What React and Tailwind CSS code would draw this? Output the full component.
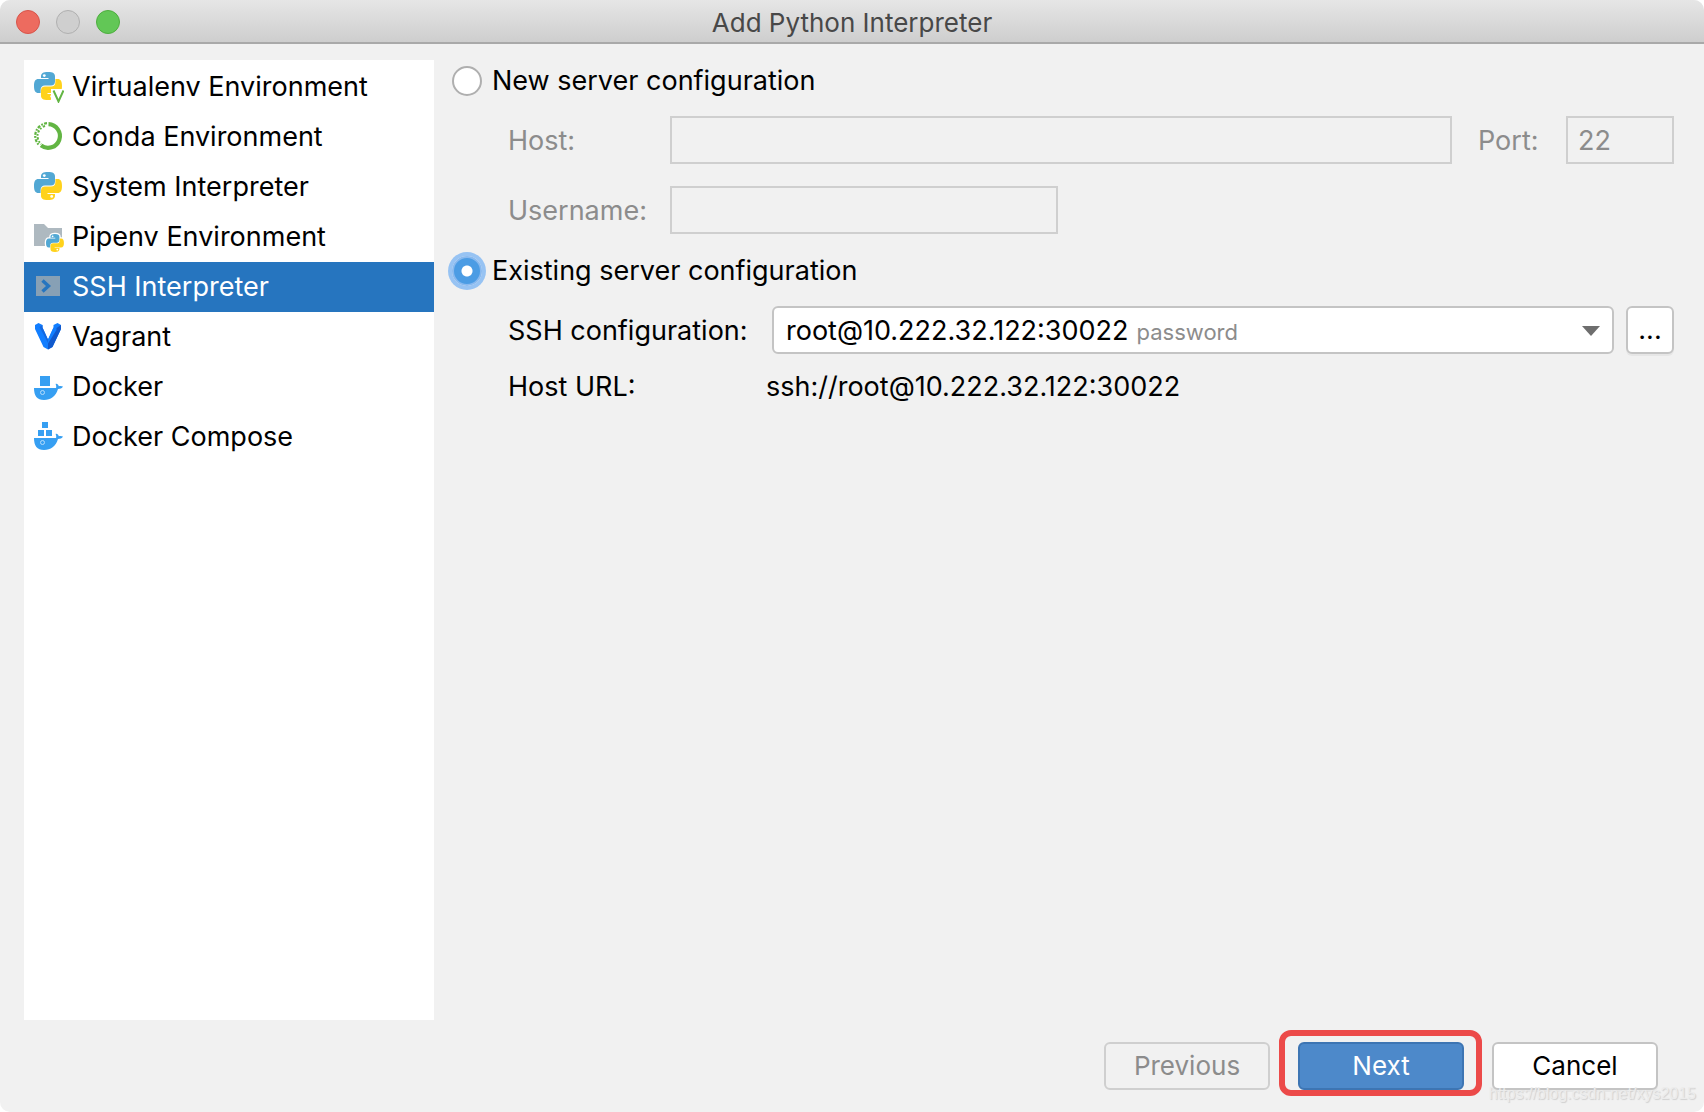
import React from "react";

const SNAKE =
  "M7 4.5C7 1.2 9 0 14 0S21 1.2 21 4.5V9.5C21 12 19.5 13.5 17 13.5H11C8.2 13.5 6.6 15 6.6 18V21H4.5C1.2 21 0 18.5 0 14S1.2 7 4.5 7H14.5V6H7Z";

function Snakes() {
  return (
    <>
      <path d={SNAKE} fill="#52a8d4" />
      <path d={SNAKE} fill="#ffd21c" transform="rotate(180 14 14)" />
      <circle cx="10.3" cy="3.6" r="1.4" fill="#fff" />
      <circle cx="17.7" cy="24.4" r="1.4" fill="#fff" />
    </>
  );
}

function Icon({ children }) {
  return (
    <svg viewBox="0 0 32 32" className="size-8 shrink-0" aria-hidden="true">
      {children}
    </svg>
  );
}

function VirtualenvIcon() {
  return (
    <Icon>
      <g transform="translate(2 1)">
        <Snakes />
      </g>
      <path d="M19 18H32V32H19Z" fill="#fff" />
      <path d="M21.5 19.5L26.5 30.5L31.5 19.5" fill="none" stroke="#62b543" strokeWidth="2" />
    </Icon>
  );
}

function CondaIcon() {
  return (
    <Icon>
      <path d="M16.5 3.2A11.8 11.8 0 1 1 9 24.4" fill="none" stroke="#62b543" strokeWidth="4.2" />
      <path
        d="M15 2.2A12.8 12.8 0 0 0 7.5 24.5"
        fill="none"
        stroke="#62b543"
        strokeWidth="2.2"
        strokeDasharray="3 1.2 1.8 1.4"
      />
      <path
        d="M14.2 4.8A10.4 10.4 0 0 0 9.2 23"
        fill="none"
        stroke="#62b543"
        strokeWidth="2"
        strokeDasharray="1.8 1.4 2.4 1.6"
        strokeDashoffset="2"
      />
    </Icon>
  );
}

function PythonIcon() {
  return (
    <Icon>
      <g transform="translate(2 1)">
        <Snakes />
      </g>
    </Icon>
  );
}

function PipenvIcon() {
  return (
    <Icon>
      <path d="M2 3H12L16 7H30V25H2Z" fill="#aeb9c0" />
      <g transform="translate(14 13) scale(0.64)">
        <path d={SNAKE} fill="#fff" stroke="#fff" strokeWidth="4" />
        <path d={SNAKE} fill="#fff" stroke="#fff" strokeWidth="4" transform="rotate(180 14 14)" />
        <Snakes />
      </g>
    </Icon>
  );
}

function SshIcon() {
  return (
    <Icon>
      <path d="M4 5H28V25H4Z" fill="#87a0b5" />
      <path d="M10.5 9.5L16.5 15L10.5 20.5" fill="none" stroke="#2675bf" strokeWidth="3.4" />
    </Icon>
  );
}

function VagrantIcon() {
  return (
    <Icon>
      <path
        d="M3 4L6.5 2L10.5 4V6.5L16 18.5L21.5 6.5V4L25.5 2L29 4V8L20.5 26L16 28.5L11.5 26L3 8Z"
        fill="#127eff"
      />
      <path d="M16 18.5L21.5 6.5L24 7.5V9.5L16 24Z" fill="#127eff" />
      <path d="M24.5 7L29 4V8L20.5 26L16 28.5V22.5L24.5 9Z" fill="#1159cc" />
      <path d="M10.5 4V6.5L16 18.5V22L7.5 6Z" fill="#1468e0" />
    </Icon>
  );
}

function Whale() {
  return (
    <>
      <path
        d="M2 17H24C24.5 15.8 24.2 14.2 23.6 12.9C24.8 12.3 26.5 13.4 26.8 15.2C28.4 14.7 30 15 31 15.6C30 17.4 28.2 18 26 18C23.6 25.5 18.8 29 12 29C5 29 2 25 2 17Z"
        fill="#369ff2"
      />
      <circle cx="10.5" cy="21.5" r="2" fill="none" stroke="#b5dcfb" strokeWidth="1" />
    </>
  );
}

function DockerIcon() {
  return (
    <Icon>
      <path d="M8 5H18V15H8Z" fill="#369ff2" />
      <Whale />
    </Icon>
  );
}

function DockerComposeIcon() {
  return (
    <Icon>
      <path d="M10 1H16V7H10ZM6 9H12V15H6ZM14 9H20V15H14Z" fill="#369ff2" />
      <Whale />
    </Icon>
  );
}

const ENVIRONMENTS = [
  { name: "Virtualenv Environment", Glyph: VirtualenvIcon },
  { name: "Conda Environment", Glyph: CondaIcon },
  { name: "System Interpreter", Glyph: PythonIcon },
  { name: "Pipenv Environment", Glyph: PipenvIcon },
  { name: "SSH Interpreter", Glyph: SshIcon, selected: true },
  { name: "Vagrant", Glyph: VagrantIcon },
  { name: "Docker", Glyph: DockerIcon },
  { name: "Docker Compose", Glyph: DockerComposeIcon },
];

function TitleBar() {
  return (
    <header className="grid h-11 shrink-0 grid-cols-[1fr_auto_1fr] items-center rounded-t-[10px] border-b-2 border-[#a9a9a9] bg-linear-to-b from-[#e6e6e6] to-[#cecece] px-4 pt-0.5">
      <div className="flex gap-4">
        <button aria-label="Close" className="size-6 rounded-full border border-[#d8544a] bg-[#ed6b5f]" />
        <button aria-label="Minimize" className="size-6 rounded-full border border-[#b0b0b0] bg-[#cfcfcf]" />
        <button aria-label="Zoom" className="size-6 rounded-full border border-[#4dae3e] bg-[#62c756]" />
      </div>
      <h1 className="pt-0.5 text-[26px] leading-8 text-[#484848]">Add Python Interpreter</h1>
    </header>
  );
}

function Sidebar() {
  return (
    <nav className="w-[410px] shrink-0 bg-white pt-0.5">
      <ul>
        {ENVIRONMENTS.map(({ name, Glyph, selected }) => (
          <li key={name}>
            <button
              className={
                selected
                  ? "flex h-[50px] w-full items-center gap-2 bg-[#2675bf] pl-2 text-left text-white"
                  : "flex h-[50px] w-full items-center gap-2 pl-2 text-left"
              }
            >
              <Glyph />
              {name}
            </button>
          </li>
        ))}
      </ul>
    </nav>
  );
}

export default function App() {
  const field = "h-12 min-w-0 border-2 border-[#cfcfcf] bg-transparent px-2.5 text-[#8c8c8c]";
  return (
    <div className="min-h-screen bg-white">
      <main className="flex min-h-screen flex-col rounded-[10px] bg-[#f1f1f1] font-['Inter',sans-serif] text-[27px] leading-8 text-black">
        <TitleBar />
        <div className="flex grow pt-4 pr-[30px] pl-6">
          <Sidebar />
          <form className="grow pl-[18px]">
            <label className="flex h-[42px] items-center gap-2.5">
              <input
                type="radio"
                name="server"
                className="size-[30px] appearance-none rounded-full border-2 border-[#afafaf] bg-white"
              />
              New server configuration
            </label>
            <div className="mt-3.5 flex items-center pl-14 text-[#8c8c8c]">
              <label htmlFor="host" className="w-[162px] pt-0.5">
                Host:
              </label>
              <input id="host" disabled className={`${field} grow`} />
              <label htmlFor="port" className="w-[114px] pt-0.5 pl-[26px]">
                Port:
              </label>
              <input id="port" disabled defaultValue="22" className={`${field} w-[108px]`} />
            </div>
            <div className="mt-[22px] flex items-center pl-14 text-[#8c8c8c]">
              <label htmlFor="username" className="w-[162px] pt-0.5">
                Username:
              </label>
              <input id="username" disabled className={`${field} w-[388px]`} />
            </div>
            <label className="mt-4 flex h-[42px] items-center gap-2.5">
              <input
                type="radio"
                name="server"
                defaultChecked
                className="size-[30px] appearance-none rounded-full border-2 border-[#88b9ef] bg-[radial-gradient(circle,#fff_5px,#4b9ce4_6px)] ring-4 ring-[#97c3f3]"
              />
              Existing server configuration
            </label>
            <div className="mt-3.5 flex items-center pl-14">
              <label htmlFor="ssh" className="w-[264px] pt-0.5">
                SSH configuration:
              </label>
              <div className="flex h-12 grow items-center gap-2 rounded-md border-2 border-[#c4c4c4] bg-white px-3 pt-0.5">
                <select id="ssh" className="[field-sizing:content] appearance-none bg-white">
                  <option>root@10.222.32.122:30022</option>
                </select>
                <span className="pt-0.5 text-[22px] text-[#8c8c8c]">password</span>
                <svg viewBox="0 0 18 10" className="ml-auto h-2.5 w-[18px]" aria-hidden="true">
                  <path d="M0 0H18L9 10Z" fill="#6e6e6e" />
                </svg>
              </div>
              <button
                type="button"
                className="ml-3 size-12 rounded-md border-2 border-[#c4c4c4] bg-white shadow-[0_2px_0_#e6e6e6]"
              >
                ...
              </button>
            </div>
            <div className="mt-[17px] flex items-center pl-14">
              <span className="w-[258px]">Host URL:</span>
              <output>ssh://root@10.222.32.122:30022</output>
            </div>
          </form>
        </div>
        <footer className="relative flex h-[92px] shrink-0 items-start justify-end pt-2.5 pr-[46px] text-[26px]">
          <button disabled className="mt-3 h-12 w-[166px] rounded-md border-2 border-[#cfcfcf] text-[#8c8c8c]">
            Previous
          </button>
          <div className="mr-2.5 ml-[9px] rounded-xl border-6 border-[#ec4a49] pt-1.5 pr-3 pl-[13px]">
            <button className="block h-12 w-[166px] rounded-md border-2 border-[#3d75b3] bg-[#4d89ca] text-white">
              Next
            </button>
          </div>
          <button className="mt-3 h-12 w-[166px] rounded-md border-2 border-[#c4c4c4] bg-white shadow-[0_2px_0_#e6e6e6]">
            Cancel
          </button>
          <span className="absolute right-2 bottom-2 font-['Liberation_Sans',sans-serif] text-[16px] leading-5 text-[#ececec] [text-shadow:1px_1px_1px_#cfcfcf]">
            https://blog.csdn.net/xys2015
          </span>
        </footer>
      </main>
    </div>
  );
}
